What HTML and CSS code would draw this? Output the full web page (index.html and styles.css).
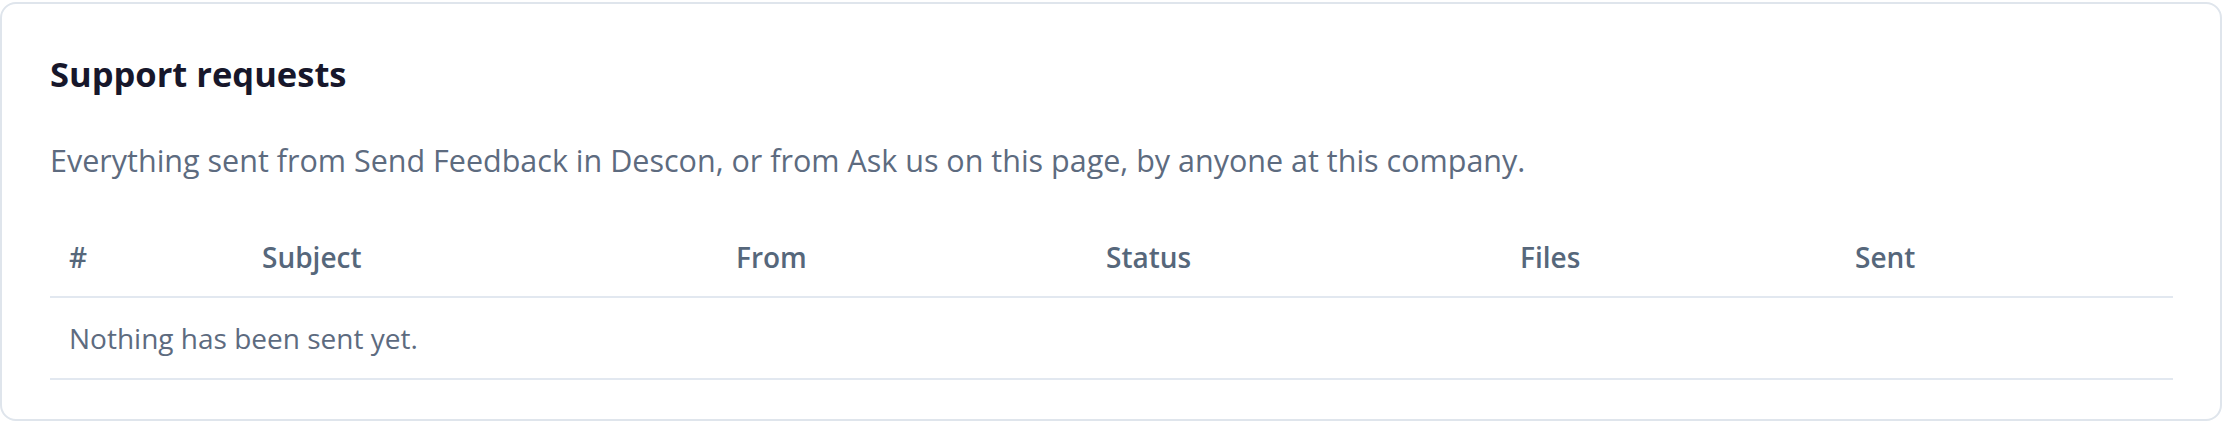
FILE: index.html
```html
<!DOCTYPE html>
<html lang="en">
<head>
    <meta charset="UTF-8">
    <meta name="viewport" content="width=device-width, initial-scale=1.0">
    <title>Support requests</title>
    <link rel="stylesheet" href="styles.css">
</head>
<body>
    <section class="card">
        <h2 class="card-title">Support requests</h2>
        <p class="card-subtitle">Everything sent from Send Feedback in Descon, or from Ask us on this page, by anyone at this company.</p>

        <table class="requests">
            <thead>
                <tr>
                    <th class="col-id">#</th>
                    <th class="col-subject">Subject</th>
                    <th class="col-from">From</th>
                    <th class="col-status">Status</th>
                    <th class="col-files">Files</th>
                    <th class="col-sent">Sent</th>
                </tr>
            </thead>
            <tbody>
                <tr>
                    <td class="empty" colspan="6">Nothing has been sent yet.</td>
                </tr>
            </tbody>
        </table>
    </section>
</body>
</html>
```

FILE: styles.css
```css
body {
    margin: 0;
    padding: 2px 2px 0 0;
    background-color: #ffffff;
    font-family: "Open Sans", "Noto Sans", sans-serif;
}

/* Card */
.card {
    border: 2px solid #dfe5ec;
    border-radius: 16px;
    padding: 46px 47px 39px 48px;
    background-color: #ffffff;
}

.card-title {
    margin: 0;
    font-size: 34.5px;
    line-height: 48px;
    font-weight: 700;
    color: #17172b;
}

.card-subtitle {
    margin: 40px 0 36px;
    font-size: 30.5px;
    line-height: 44px;
    color: #5d6b7f;
}

/* Requests table */
.requests {
    width: 100%;
    border-collapse: collapse;
    table-layout: fixed;
}

.requests th,
.requests td {
    box-sizing: border-box;
    padding: 19px 19px;
    line-height: 40px;
    text-align: left;
    border-bottom: 2px solid #e2e8f0;
}

.requests th {
    font-size: 28px;
    font-weight: 600;
    color: #56677b;
}

.requests td {
    padding-top: 20px;
    padding-bottom: 20px;
    font-size: 28px;
    color: #5d6b7f;
}

.col-id { width: 193px; }
.col-subject { width: 474px; }
.col-from { width: 370px; }
.col-status { width: 414px; }
.col-files { width: 335px; }
.col-sent { width: auto; }
```
